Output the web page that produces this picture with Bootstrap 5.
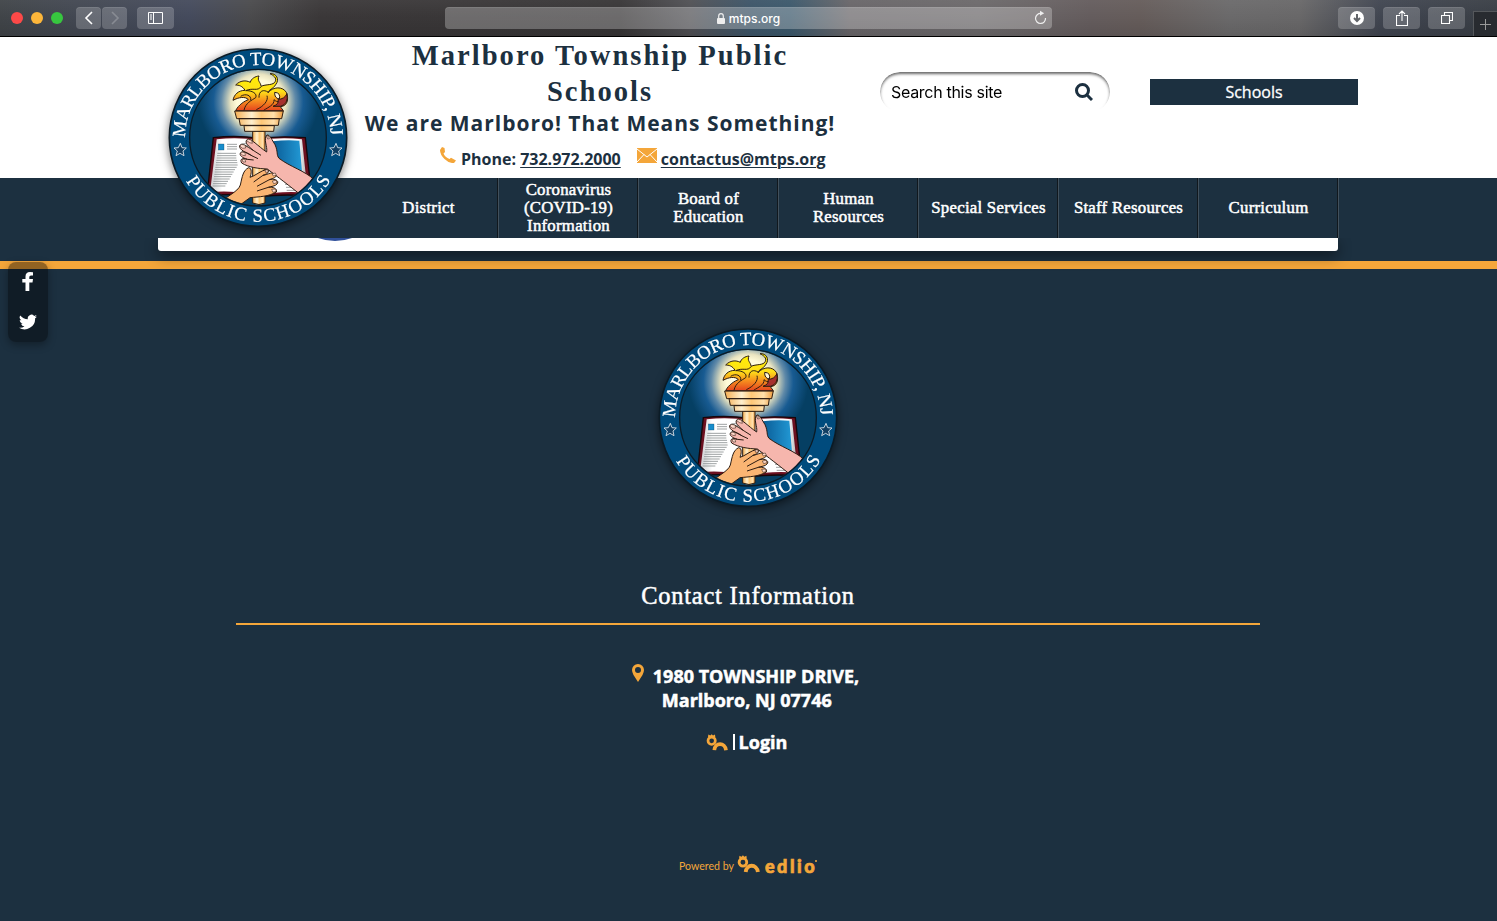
<!DOCTYPE html>
<html lang="en">
<head>
<meta charset="utf-8">
<meta name="viewport" content="width=device-width, initial-scale=1">
<title>Marlboro Township Public Schools</title>
<link href="https://cdn.jsdelivr.net/npm/bootstrap@5.3.0/dist/css/bootstrap.min.css" rel="stylesheet">
<style>
:root{--navy:#1c3040;--gold:#f4a63a}
body{background:var(--navy);font-family:"Open Sans",sans-serif;color:var(--navy);height:921px;overflow:hidden}
.serif{font-family:"Liberation Serif",serif}
svg{display:block;flex:none}
/* browser bar */
.chrome{height:37px;border-bottom:1px solid #000;background:linear-gradient(#ffffff0c,#0000 50%,#00000018),linear-gradient(90deg,#404448 0,#424751 75px,#444a5c 190px,#4a4a4c 250px,#3a3738 320px,#373536 620px,#505054 690px,#3c5467 750px,#3b586b 790px,#686568 850px,#6b686a 980px,#645c5d 1090px,#655c5a 1140px,#6a696a 1230px,#686768 1300px,#404550 1380px,#393e45 1497px)}
.chip{height:22px;width:37px;border-radius:4px;background:#ffffff33;margin-top:-1px;box-shadow:inset 0 1px #ffffff18}
.chip.half{width:25px}
.dot{width:12px;height:12px;border-radius:50%}
.dot-close{background:#fc4948}
.dot-min{background:#fdb63a}
.dot-max{background:#37c63f}
.address{width:607px;height:22px;border-radius:4px;background:#ffffff44;left:445px;top:7px;font:500 12px Inter,sans-serif;color:#fff;box-shadow:inset 0 1px #ffffff18}
.newtab{width:24px;height:25px;right:0;top:11px;background:#282b30;border:1px solid #54575b;border-width:1px 0 0 1px}
/* header */
.top{height:141px;background:#fff;padding-left:364px}
.titles{width:472px}
.titles h1{font-size:28.6px;line-height:36px;font-weight:700;letter-spacing:2px;padding-top:1px;white-space:nowrap}
.motto{font-size:21px;line-height:28px;font-weight:700;letter-spacing:.98px;margin-top:-1px;white-space:nowrap}
.reach{font-size:16px;line-height:24px;font-weight:700;padding-left:76px;margin-top:10px;white-space:nowrap}
.reach a{color:inherit;text-underline-offset:2px;text-decoration-thickness:1px}
.search{width:230px;height:40px;margin:35px 0 0 44px;padding:0 17px 0 11px;border-radius:20px;box-shadow:inset 0 2px 3px #0009;-webkit-mask-image:linear-gradient(#000 20%,#000 70%,transparent 95%);font:400 16px Inter,sans-serif;letter-spacing:-.3px;color:#000}
.schools{width:208px;height:26px;margin:42px 0 0 40px;background:var(--navy);color:#fff;font-size:16px;line-height:26px;-webkit-text-stroke:.3px #fff}
.menu{height:60px;background:var(--navy);padding-left:359px;position:relative;z-index:2}
.menu a{width:140px;color:#fff;font-size:16.8px;line-height:18px;text-decoration:none;text-align:center;border-right:1px solid #41505c;box-shadow:inset -1px 0 #11181e;-webkit-text-stroke:.5px #fff;letter-spacing:.25px}
.seal{width:216px;height:216px;filter:drop-shadow(0 2px 5px #0008)}
.seal-top{left:150px;top:-7px;z-index:3}
.page-end{width:1180px;height:13px;margin-left:158px;background:#fff;border-radius:0 0 3px 3px;box-shadow:0 5px 14px #0007;position:relative;z-index:1;clip-path:inset(0 -25px -30px -25px)}
.blue-arc{position:absolute;left:127px;top:-97px;width:100px;height:100px;border-radius:50%;background:#30509a}
.rule{height:8px;margin-top:10px;background:var(--gold)}
.social{left:8px;top:262px;width:40px;height:80px;border-radius:8px;background:#0006;box-shadow:0 3px 8px #0005;z-index:4}
/* footer */
.foot{padding-top:41px;color:#fff}
.foot .seal{margin-left:-1px}
.foot h2{font-size:24.4px;line-height:30px;letter-spacing:.8px;margin:55px 0 0 -1px;-webkit-text-stroke:.5px #fff}
.line{width:1024px;height:2px;background:var(--gold);margin:12px 0 0 -1px}
.where{font-size:18px;line-height:24px;font-weight:700;margin:39px 0 0 -6px;-webkit-text-stroke:.5px #fff}
.login{font-size:18px;line-height:24px;font-weight:700;margin:18px 0 0 -4px;-webkit-text-stroke:.5px #fff}
.bar{width:2px;height:16px;background:#fff}
.powered{color:var(--gold);margin:101px 0 0 -1px;font:400 10.6px Lato,sans-serif}
.edlio{font:900 18px Lato,sans-serif;letter-spacing:2.5px;-webkit-text-stroke:.7px var(--gold)}
.edlio::after{content:"";display:inline-block;width:2px;height:2px;border-radius:50%;background:var(--gold);vertical-align:11px;margin-left:-2px}
</style>
</head>
<body>
<svg width="0" height="0" class="position-absolute" aria-hidden="true">
<defs>
<radialGradient id="glow" gradientUnits="userSpaceOnUse" cx="325" cy="215" r="180"><stop offset="0" stop-color="#fff"/><stop offset=".36" stop-color="#fffbd8"/><stop offset=".46" stop-color="#e9e4c0"/><stop offset=".62" stop-color="#5f89a8"/><stop offset=".75" stop-color="#185b92"/><stop offset="1" stop-color="#053f63"/></radialGradient>
<linearGradient id="brass"><stop offset="0" stop-color="#f5ad50"/><stop offset=".35" stop-color="#fff0cf"/><stop offset=".55" stop-color="#ffc878"/><stop offset=".8" stop-color="#ffe0ac"/><stop offset="1" stop-color="#ee9a3a"/></linearGradient>
<linearGradient id="fire" x2="0" y2="1"><stop offset="0" stop-color="#fff100"/><stop offset=".48" stop-color="#fee019"/><stop offset=".72" stop-color="#f7931e"/><stop offset="1" stop-color="#e5441f"/></linearGradient>
<linearGradient id="page"><stop offset="0" stop-color="#c9cbce"/><stop offset=".25" stop-color="#fff"/><stop offset=".8" stop-color="#fff"/><stop offset="1" stop-color="#a9abae"/></linearGradient>
<linearGradient id="plate"><stop offset="0" stop-color="#0a5c96"/><stop offset="1" stop-color="#2299d5"/></linearGradient>
<clipPath id="disc"><circle cx="324" cy="323" r="203"/></clipPath>
<path id="arcTop" d="M106 323A218 218 0 0 1 542 323"/>
<path id="arcLow" d="M108 453A252 252 0 0 0 547 441"/>
<symbol id="crest" viewBox="0 0 648 648">
<circle cx="324" cy="323" r="266" fill="#004b7d" stroke="#0b1b26" stroke-width="5"/>
<circle cx="324" cy="323" r="205" fill="#064165"/>
<g clip-path="url(#disc)">
<circle cx="324" cy="323" r="205" fill="url(#glow)"/>
<path d="M190 323q70-8 138 2q65-8 138-2l19 175q-85-7-156 2q-78-10-158-3z" fill="#6c1020" stroke="#180609" stroke-width="4"/>
<path d="M200 328q70-8 126 4v162q-70-13-146-8z" fill="url(#page)"/>
<path d="M328 332q60-12 128-4l17 160q-80-6-145 7z" fill="url(#page)"/>
<path d="M368 334q42-6 80-2l8 93-72-10z" fill="url(#plate)"/>
<rect x="205" y="342" width="17" height="18" fill="#168dcc" stroke="#174967"/>
<path d="M231 343h30m-30 7h30m-30 7h30M202 370h56m-57 7h58m-59 7h59m-60 7h62m-63 7h64m-65 7h66m-67 7h64m-65 7h60m-61 7h57m-58 7h54m-55 7h51m-52 7h48m-49 7h44m-45 7h41m-42 7h38M275 341h38m-38 7h38M396 445h56m-50 9h54m-51 9h53m-50 9h52m-50 9h52" stroke="#8c9092" stroke-width="2.5"/>
<g stroke="#2c1c12" stroke-width="3" stroke-linejoin="round">
<path d="M308 303h37v216q-18 9-37 0z" fill="url(#brass)"/>
<path d="M282 287h91l-2 17h-87zM267 266h121l-3 20h-114zM254 243h146l-5 23H260z" fill="url(#brass)"/>
<path d="M257 242C265 224 286 212 295 209C286 198 265 202 249 211C252 193 266 181 285 181C278 168 266 165 257 165C270 151 288 150 301 157C303 146 316 139 327 138C320 153 333 157 333 169C347 162 371 167 376 154C381 144 370 136 360 131C379 129 390 148 377 164C369 178 355 179 354 188C370 169 398 169 409 187C418 209 411 229 391 230L400 242z" fill="url(#fire)"/>
<path d="M282 241C286 219 305 211 317 203C323 191 306 181 287 182C309 172 323 185 333 170M327 203C326 182 341 177 355 187M341 241C354 232 374 225 372 209C381 219 397 216 404 207M319 239C341 229 356 212 351 197M272 199C287 189 305 196 302 211" fill="none"/>
<path d="M374 187q19 1 14 20-15-2-14-20" fill="#fff8d8"/>
<path d="M391 229q25-6 20-38-8 17-27 17 5 14-15 21z" fill="#a6302e"/>
<path d="M202 528C226 498 264 487 271 465C277 439 279 421 296 413C307 415 304 431 300 442C315 438 332 422 350 418C362 421 355 431 339 436C354 434 370 422 380 432C383 440 369 446 358 449C376 444 389 454 381 462C376 469 363 469 355 472C369 469 383 477 379 486C356 500 328 500 300 503L263 530z" fill="#fab573"/>
<path d="M339 436L311 456M358 449L321 469M355 472L321 483" fill="none"/>
<path d="M350 366C353 349 339 328 351 315C360 314 366 330 375 344C385 366 378 373 387 385C421 411 463 421 495 451L459 500C416 466 384 441 352 417C326 416 295 412 275 399C268 387 278 383 292 388C278 384 266 376 272 368C280 361 293 369 307 378C290 368 266 360 269 347C274 338 286 346 311 362C296 349 282 338 291 329C302 322 325 350 350 366z" fill="#f6b6ad"/>
<path d="M292 388l19 2M307 378l17 8M311 362l22 14" fill="none"/>
<path d="M273 343l12 2 2 9-9 1-8-6zM293 327l12 4 2 9-8-2-9-6zM275 366l10 2 1 9-8-1-6-6zM276 388l9 0 2 8-8 0zM367 453l11-2 3 7-10 3zM365 478l12-1 1 8-9 2zM366 431l10-2 3 7-9 2zM345 420l8-1 2 7-8 1zM350 318l5-1 3 9-5 1z" fill="#ffd8c9" stroke-width="1.6"/>
</g></g>
<circle cx="324" cy="323" r="205" fill="none" stroke="#0b1b26" stroke-width="4"/>
<g font-family="Liberation Serif,serif" font-size="56" fill="#fff" stroke="#fff" stroke-width=".6">
<text textLength="678" lengthAdjust="spacing"><textPath href="#arcTop">MARLBORO TOWNSHIP, NJ</textPath></text>
<text textLength="524" lengthAdjust="spacing"><textPath href="#arcLow">PUBLIC SCHOOLS</textPath></text></g>
<path id="st" d="M91 340l5 13 13 1-10 9 3 14-12-7-12 7 4-14-10-9 13-1z" fill="#123f63" stroke="#e9edf0" stroke-width="2.5"/>
<use href="#st" x="467"/>
</symbol>
<symbol id="bee" viewBox="0 0 66 50"><circle cx="17" cy="20" r="11" fill="none" stroke="currentColor" stroke-width="8"/><path d="M6 9L7 1l6 3 4-4 4 4 6-3 1 8" fill="currentColor"/><path d="M25 48C27 24 57 24 60 48" fill="none" stroke="currentColor" stroke-width="11"/></symbol>
</defs></svg>

<div class="chrome position-relative d-flex align-items-center">
 <div class="d-flex gap-2" style="margin-left:11px"><span class="dot dot-close"></span><span class="dot dot-min"></span><span class="dot dot-max"></span></div>
 <div class="chip half d-flex align-items-center justify-content-center" style="margin-left:13px"><svg width="10" height="14" fill="none" stroke="#fff" stroke-width="1.6"><path d="M8 1L2 7l6 6"/></svg></div>
 <div class="chip half d-flex align-items-center justify-content-center" style="margin-left:1px"><svg width="10" height="14" fill="none" stroke="#888c93" stroke-width="1.6"><path d="M2 1l6 6-6 6"/></svg></div>
 <div class="chip d-flex align-items-center justify-content-center" style="margin-left:10px"><svg width="16" height="12" fill="none" stroke="#fff"><path d="M.5.5h14v11H.5zM5.500 .5v11M2 3h2M2 5h2M2 7h2"/></svg></div>
 <div class="address position-absolute d-flex align-items-center justify-content-center"><svg class="me-1" width="8" height="11"><rect y="5" width="8" height="6" rx="1" fill="#eee"/><path d="M1.700 5V3a2.300 2.300 0 0 1 4.600 0v2" fill="none" stroke="#eee" stroke-width="1.200"/></svg>mtps.org
  <svg class="position-absolute" style="right:5px;top:3px" width="13" height="15" fill="none" stroke="#eee" stroke-width="1.200"><path d="M7 3.500A5 5 0 1 0 11.500 8"/><path d="M6 .8v5l4.200-2.500z" fill="#eee" stroke="none"/></svg></div>
 <div class="d-flex ms-auto" style="gap:8px;margin-right:32px">
  <div class="chip d-flex align-items-center justify-content-center"><svg width="14" height="14"><circle cx="7" cy="7" r="7" fill="#fff"/><path d="M7 3v7M4 7l3 3 3-3" fill="none" stroke="#62656a" stroke-width="2"/></svg></div>
  <div class="chip d-flex align-items-center justify-content-center"><svg width="12" height="16" fill="none" stroke="#fff" stroke-width="1.100"><path d="M4 5.500H.5v10h11v-10H8M6 11V1M3 4l3-3 3 3"/></svg></div>
  <div class="chip d-flex align-items-center justify-content-center"><svg width="12" height="12" fill="none" stroke="#fff" stroke-width="1.100"><path d="M.5 3.500h8v8h-8zM3.500 3V.5h8v8H9"/></svg></div>
 </div>
 <div class="newtab position-absolute d-flex align-items-center justify-content-center"><svg width="11" height="11" stroke="#999"><path d="M5.500 0v11M0 5.500h11"/></svg></div>
</div>

<div class="position-relative">
 <svg class="seal seal-top position-absolute"><use href="#crest"/></svg>
 <header class="top d-flex align-items-start">
  <div class="titles text-center">
   <h1 class="serif mb-0">Marlboro Township Public<br>Schools</h1>
   <div class="motto">We are Marlboro! That Means Something!</div>
   <div class="reach d-flex">
    <svg width="16" height="16" viewBox="0 0 16 16" fill="#f4a63a"><path d="M2 0L4.500 1 5 5 3.500 6.500Q5 10 9.500 12L11 10.800 16 13.500 14 16Q9 16.500 4.500 12T0 3z"/></svg>
    <span style="margin-left:5px">Phone: <a href="#">732.972.2000</a></span>
    <svg style="margin:1px 4px 0 16px" width="20" height="15"><path d="M0 0h20v15H0z" fill="#f4a63a"/><path d="M0 1l10 8 10-8M0 14l7-7.500M20 14l-7-7.500" fill="none" stroke="#fff"/></svg>
    <a href="#">contactus@mtps.org</a>
   </div>
  </div>
  <div class="search d-flex align-items-center justify-content-between"><span>Search this site</span><svg width="18" height="18" fill="none" stroke="#1c3040" stroke-width="3"><circle cx="7.500" cy="7.500" r="6"/><path d="M12 12l5 5"/></svg></div>
  <div class="schools text-center">Schools</div>
 </header>
 <nav class="menu serif d-flex">
  <a href="#" class="d-flex align-items-center justify-content-center">District</a>
  <a href="#" class="d-flex align-items-center justify-content-center">Coronavirus<br>(COVID-19)<br>Information</a>
  <a href="#" class="d-flex align-items-center justify-content-center">Board of<br>Education</a>
  <a href="#" class="d-flex align-items-center justify-content-center">Human<br>Resources</a>
  <a href="#" class="d-flex align-items-center justify-content-center">Special Services</a>
  <a href="#" class="d-flex align-items-center justify-content-center">Staff Resources</a>
  <a href="#" class="d-flex align-items-center justify-content-center">Curriculum</a>
 </nav>
</div>
<div class="page-end"><span class="blue-arc"></span></div>
<div class="rule"></div>
<aside class="social position-absolute d-flex flex-column align-items-center">
 <svg style="margin-top:10px" width="12" height="20" viewBox="0 0 12 20" fill="#fff"><path d="M11 .2v3.300H9Q7.300 3.500 7.300 5v2H11l-.5 3.500H7.300V19H3.500v-8.500H.3V7h3.200V4.500Q3.500 0 8 0z"/></svg>
 <svg style="margin-top:21px" width="18" height="18" viewBox="0 0 24 24" fill="#fff"><path d="M24 4.600a10 10 0 0 1-2.800.8 5 5 0 0 0 2.100-2.700 10 10 0 0 1-3.100 1.200A4.900 4.900 0 0 0 11.800 8.400 14 14 0 0 1 1.700 3.200a4.900 4.900 0 0 0 1.500 6.600 5 5 0 0 1-2.200-.6 4.900 4.900 0 0 0 3.900 4.900 5 5 0 0 1-2.200.1 4.900 4.900 0 0 0 4.600 3.400A9.900 9.900 0 0 1 0 19.500 14 14 0 0 0 21.500 7.100 10 10 0 0 0 24 4.600z"/></svg>
</aside>
<footer class="foot d-flex flex-column align-items-center">
 <svg class="seal"><use href="#crest"/></svg>
 <h2 class="serif">Contact Information</h2>
 <div class="line"></div>
 <div class="where d-flex"><svg width="12" height="18" style="margin-right:9px" viewBox="0 0 12 18"><path fill="#f4a63a" fill-rule="evenodd" d="M6 0a6 6 0 0 0-6 6q0 2 1.500 5L6 18l4.500-7Q12 8 12 6a6 6 0 0 0-6-6m0 3a3 3 0 1 1 0 6 3 3 0 0 1 0-6"/></svg><div>1980 TOWNSHIP DRIVE,<br>&ensp;Marlboro, NJ 07746</div></div>
 <div class="login d-flex align-items-center"><svg width="22" height="17" style="color:#f4a63a;margin-right:5px"><use href="#bee"/></svg><span class="bar" style="margin-right:4px"></span>Login</div>
 <div class="powered d-flex align-items-center"><span>Powered by</span><svg width="23" height="18" style="margin:-4px 5px 0 3px"><use href="#bee"/></svg><span class="edlio">edlio</span></div>
</footer>
<script src="https://cdn.jsdelivr.net/npm/bootstrap@5.3.0/dist/js/bootstrap.bundle.min.js"></script>
</body>
</html>
